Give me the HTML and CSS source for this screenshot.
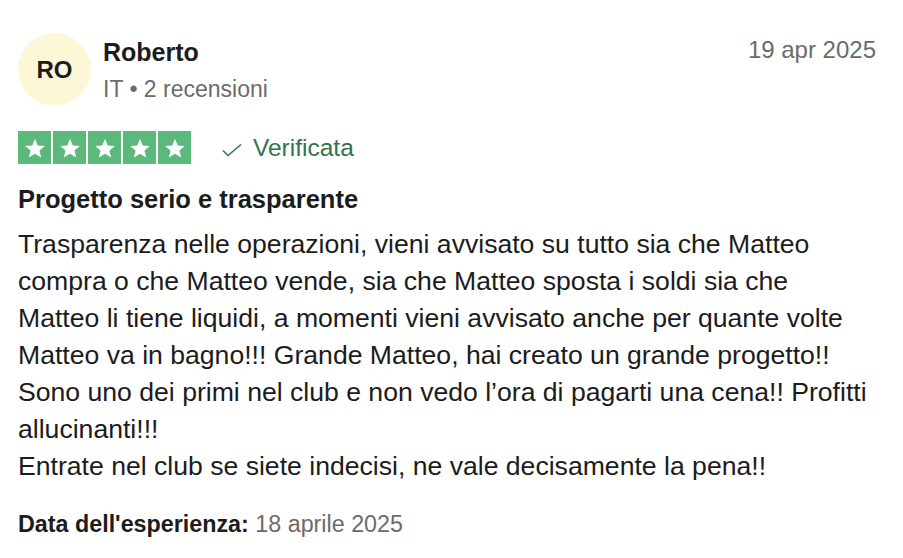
FILE: index.html
```html
<!DOCTYPE html>
<html lang="it">
<head>
<meta charset="utf-8">
<link rel="stylesheet" href="styles.css">
</head>
<body>
<article class="review">
  <header class="head">
    <div class="avatar">RO</div>
    <div class="who">
      <div class="name">Roberto</div>
      <div class="meta">IT • 2 recensioni</div>
    </div>
    <time class="date">19 apr 2025</time>
  </header>
  <div class="rating">
    <div class="stars">
      <span class="star"><svg viewBox="0 0 24 24"><path d="M12 3.5l2.5 6.1 6.6.5-5 4.3 1.6 6.4L12 17.3l-5.7 3.5 1.6-6.4-5-4.3 6.6-.5z"/></svg></span>
      <span class="star"><svg viewBox="0 0 24 24"><path d="M12 3.5l2.5 6.1 6.6.5-5 4.3 1.6 6.4L12 17.3l-5.7 3.5 1.6-6.4-5-4.3 6.6-.5z"/></svg></span>
      <span class="star"><svg viewBox="0 0 24 24"><path d="M12 3.5l2.5 6.1 6.6.5-5 4.3 1.6 6.4L12 17.3l-5.7 3.5 1.6-6.4-5-4.3 6.6-.5z"/></svg></span>
      <span class="star"><svg viewBox="0 0 24 24"><path d="M12 3.5l2.5 6.1 6.6.5-5 4.3 1.6 6.4L12 17.3l-5.7 3.5 1.6-6.4-5-4.3 6.6-.5z"/></svg></span>
      <span class="star"><svg viewBox="0 0 24 24"><path d="M12 3.5l2.5 6.1 6.6.5-5 4.3 1.6 6.4L12 17.3l-5.7 3.5 1.6-6.4-5-4.3 6.6-.5z"/></svg></span>
    </div>
    <div class="verified">
      <svg class="check" viewBox="0 0 20 14"><path d="M1 7.5l5 5L19 1.5"/></svg>
      <span>Verificata</span>
    </div>
  </div>
  <h2 class="title">Progetto serio e trasparente</h2>
  <p class="text">Trasparenza nelle operazioni, vieni avvisato su tutto sia che Matteo compra o che Matteo vende, sia che Matteo sposta i soldi sia che Matteo li tiene liquidi, a momenti vieni avvisato anche per quante volte Matteo va in bagno!!! Grande Matteo, hai creato un grande progetto!! Sono uno dei primi nel club e non vedo l’ora di pagarti una cena!! Profitti allucinanti!!!<br>Entrate nel club se siete indecisi, ne vale decisamente la pena!!</p>
  <p class="exp"><strong>Data dell'esperienza:</strong> 18 aprile 2025</p>
</article>
</body>
</html>
```

FILE: styles.css
```css
* { box-sizing: border-box; }
html, body { margin: 0; background: #fff; }
body {
  font-family: "Liberation Sans", Arial, Helvetica, sans-serif;
  color: #1c1c1c;
  width: 903px;
  height: 558px;
  overflow: hidden;
}
.review { padding: 33px 27px 0 18px; }
.head { display: flex; align-items: flex-start; }
.avatar {
  width: 73px; height: 73px; border-radius: 50%;
  background: #fcf8d7;
  display: flex; align-items: center; justify-content: center;
  font-weight: 700; font-size: 24px; color: #1c1c1c;
  margin-right: 12px;
}
.who { flex: 1; padding-top: 4px; }
.name { font-weight: 700; font-size: 25px; line-height: 30px; }
.meta { font-size: 23px; line-height: 30px; color: #6b6b6b; margin-top: 7px; }
.date { font-size: 24px; color: #6b6b6b; line-height: 30px; padding-top: 2px; }
.rating { display: flex; align-items: center; margin-top: 25px; }
.stars { display: flex; gap: 2px; }
.star {
  width: 33px; height: 33px; background: #5cb97c;
  display: flex; align-items: center; justify-content: center;
}
.star svg { width: 26px; height: 26px; fill: #fff; }
.verified { display: flex; align-items: center; margin-left: 31px; color: #34734f; font-size: 24.5px; }
.check { width: 20px; height: 14px; fill: none; stroke: #3a7254; stroke-width: 1.6; margin-right: 11px; margin-top: 5px; }
.title { font-size: 25.5px; font-weight: 700; margin: 20px 0 0; line-height: 30px; }
.text { font-size: 26.6px; line-height: 37px; margin: 12px 0 0; max-width: 870px; }
.exp { font-size: 23.3px; color: #6b6b6b; margin: 25px 0 0; line-height: 28px; }
.exp strong { color: #1c1c1c; }
```
